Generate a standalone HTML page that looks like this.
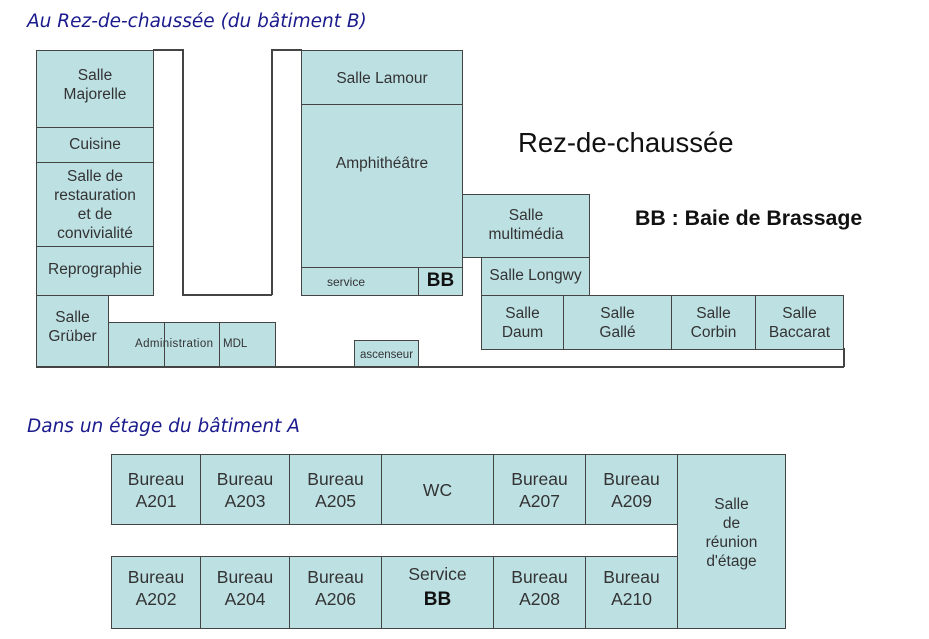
<!DOCTYPE html>
<html><head><meta charset="utf-8"><style>
body{margin:0;width:929px;height:639px;background:#fff;position:relative;overflow:hidden;font-family:"Liberation Sans",sans-serif;color:#222}
.b{position:absolute;background:#bde0e3;border:1.5px solid #444;box-sizing:border-box;text-align:center;font-size:15.5px;line-height:19px;color:#333}
.l{position:absolute;background:#444}
.t{position:absolute;font-style:italic;color:#1a1a8c;font-size:18.5px;font-family:"DejaVu Sans",sans-serif}
.f{font-size:17.5px;line-height:22px}
</style></head><body>
<div class="t" style="left:27px;top:11px">Au Rez-de-chaussée (du bâtiment B)</div>
<div class="t" style="left:27px;top:416px">Dans un étage du bâtiment A</div>

<div class="l" style="left:153px;top:49px;width:30px;height:1.5px"></div>
<div class="l" style="left:182px;top:49px;width:1.5px;height:246px"></div>
<div class="l" style="left:182px;top:294px;width:90px;height:1.5px"></div>
<div class="l" style="left:271px;top:49px;width:1.5px;height:246px"></div>
<div class="l" style="left:271px;top:49px;width:31px;height:1.5px"></div>
<div class="l" style="left:36px;top:366px;width:808px;height:1.5px"></div>
<div class="l" style="left:843px;top:348px;width:1.5px;height:19px"></div>

<div class="b" style="left:36px;top:50px;width:118px;height:78px;padding-top:15px">Salle<br>Majorelle</div>
<div class="b" style="left:36px;top:127px;width:118px;height:36px;padding-top:7px">Cuisine</div>
<div class="b" style="left:36px;top:162px;width:118px;height:85px;padding-top:4px">Salle de<br>restauration<br>et de<br>convivialité</div>
<div class="b" style="left:36px;top:246px;width:118px;height:50px;padding-top:13px">Reprographie</div>
<div class="b" style="left:36px;top:295px;width:73px;height:72px;padding-top:12px">Salle<br>Grüber</div>
<div class="b" style="left:108px;top:322px;width:57px;height:45px"></div>
<div class="b" style="left:164px;top:322px;width:56px;height:45px"></div>
<div class="b" style="left:219px;top:322px;width:57px;height:45px"></div>
<div style="position:absolute;left:135px;top:338px;font-size:11.5px;color:#333;letter-spacing:0.4px">Administration</div>
<div style="position:absolute;left:223px;top:338px;font-size:11.5px;color:#333">MDL</div>
<div class="b" style="left:354px;top:340px;width:65px;height:27px;font-size:11.5px;padding-top:5px">ascenseur</div>

<div class="b" style="left:301px;top:50px;width:162px;height:55px;padding-top:18px">Salle Lamour</div>
<div class="b" style="left:301px;top:104px;width:162px;height:164px;padding-top:49px">Amphithéâtre</div>
<div class="b" style="left:301px;top:267px;width:118px;height:29px;font-size:12px;padding-top:5px;text-align:left;padding-left:25px">service</div>
<div class="b" style="left:418px;top:267px;width:45px;height:29px;font-size:19px;font-weight:bold;color:#111;padding-top:3px">BB</div>

<div class="b" style="left:462px;top:194px;width:128px;height:64px;padding-top:11px">Salle<br>multimédia</div>
<div class="b" style="left:481px;top:257px;width:109px;height:39px;padding-top:8px">Salle Longwy</div>
<div class="b" style="left:481px;top:295px;width:83px;height:55px;padding-top:8px">Salle<br>Daum</div>
<div class="b" style="left:563px;top:295px;width:109px;height:55px;padding-top:8px">Salle<br>Gallé</div>
<div class="b" style="left:671px;top:295px;width:85px;height:55px;padding-top:8px">Salle<br>Corbin</div>
<div class="b" style="left:755px;top:295px;width:89px;height:55px;padding-top:8px">Salle<br>Baccarat</div>

<div style="position:absolute;left:518px;top:127px;font-size:27.5px;color:#111">Rez-de-chaussée</div>
<div style="position:absolute;left:635px;top:206px;font-size:21.3px;font-weight:bold;color:#111">BB : Baie de Brassage</div>

<div class="b f" style="left:111px;top:454px;width:90px;height:71px;padding-top:13px">Bureau<br>A201</div>
<div class="b f" style="left:200px;top:454px;width:90px;height:71px;padding-top:13px">Bureau<br>A203</div>
<div class="b f" style="left:289px;top:454px;width:93px;height:71px;padding-top:13px">Bureau<br>A205</div>
<div class="b f" style="left:381px;top:454px;width:113px;height:71px;padding-top:24px">WC</div>
<div class="b f" style="left:493px;top:454px;width:93px;height:71px;padding-top:13px">Bureau<br>A207</div>
<div class="b f" style="left:585px;top:454px;width:93px;height:71px;padding-top:13px">Bureau<br>A209</div>
<div class="b" style="left:677px;top:454px;width:109px;height:175px;padding-top:40px">Salle<br>de<br>réunion<br>d'étage</div>
<div class="b f" style="left:111px;top:556px;width:90px;height:73px;padding-top:9px">Bureau<br>A202</div>
<div class="b f" style="left:200px;top:556px;width:90px;height:73px;padding-top:9px">Bureau<br>A204</div>
<div class="b f" style="left:289px;top:556px;width:93px;height:73px;padding-top:9px">Bureau<br>A206</div>
<div class="b f" style="left:381px;top:556px;width:113px;height:73px;padding-top:6px">Service<br><b style="display:block;margin-top:4px;font-size:19px;color:#111">BB</b></div>
<div class="b f" style="left:493px;top:556px;width:93px;height:73px;padding-top:9px">Bureau<br>A208</div>
<div class="b f" style="left:585px;top:556px;width:93px;height:73px;padding-top:9px">Bureau<br>A210</div>
</body></html>
